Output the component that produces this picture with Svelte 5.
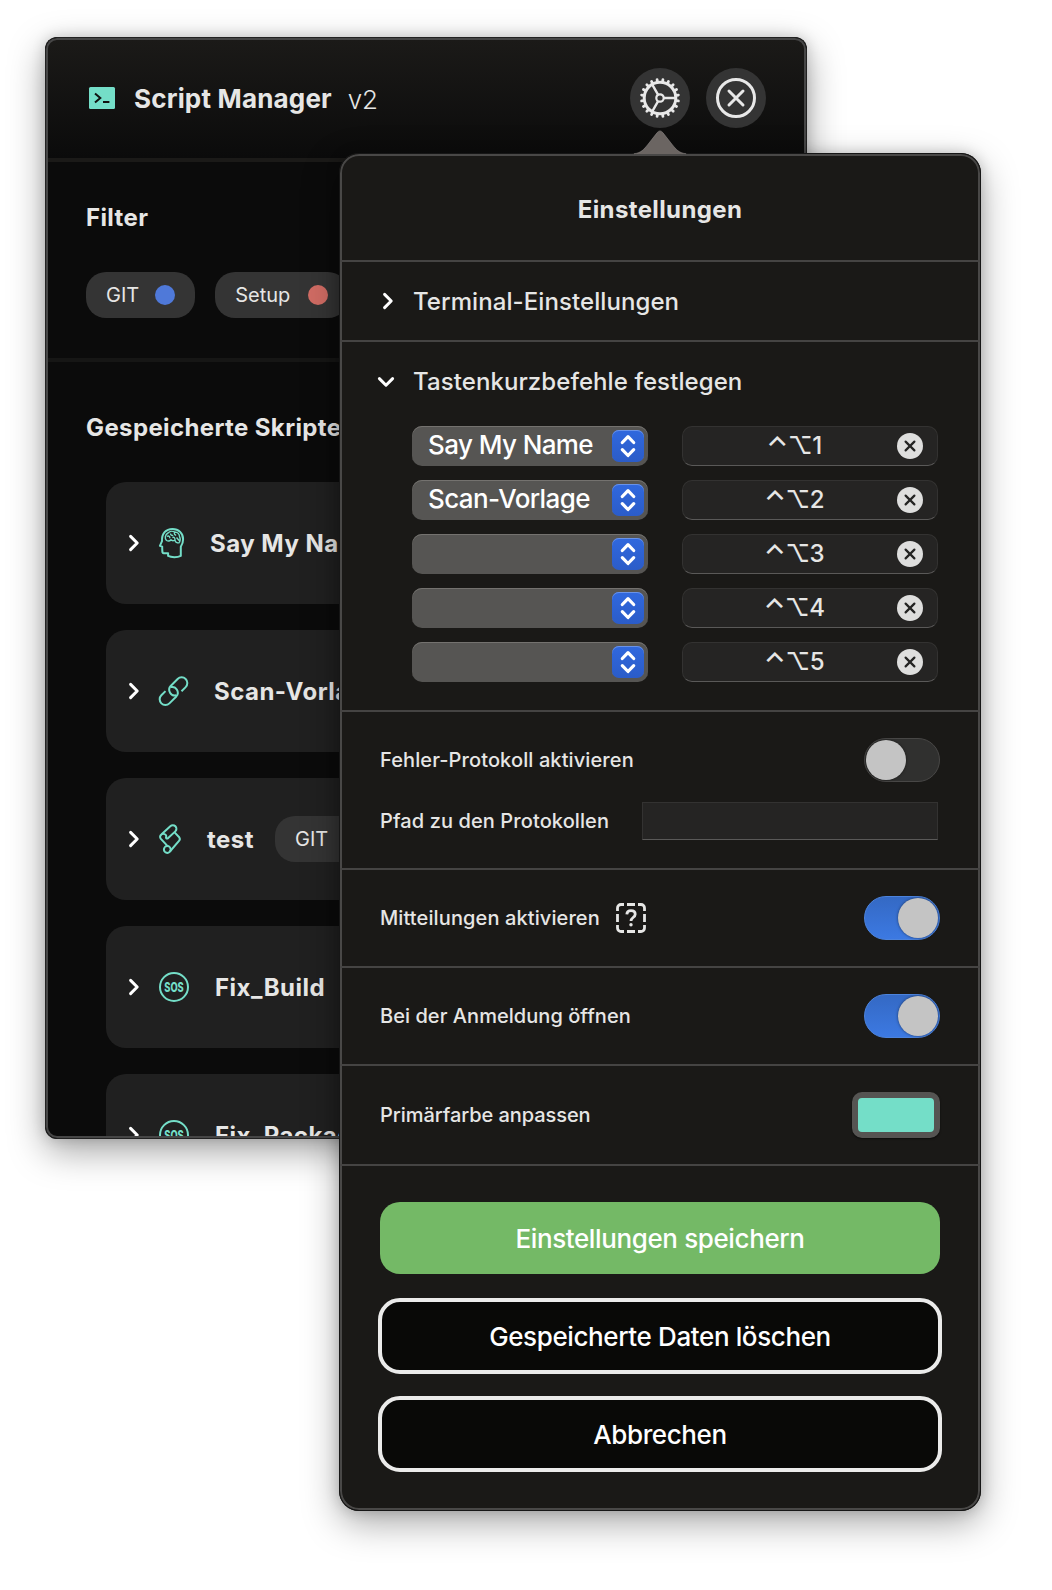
<script>
  const filters = [
    { label: 'GIT', tone: 'blue' },
    { label: 'Setup', tone: 'red' }
  ];
  const scripts = [
    { name: 'Say My Name', icon: 'brain' },
    { name: 'Scan-Vorlage', icon: 'link' },
    { name: 'test', icon: 'scroll', tag: 'GIT' },
    { name: 'Fix_Build', icon: 'sos' },
    { name: 'Fix_Packages', icon: 'sos' }
  ];
  const shortcuts = ['Say My Name', 'Scan-Vorlage', '', '', ''];
  const teeth = Array.from({ length: 20 }, (_, i) => i * 18 + 9);
</script>

{#snippet chevron(down)}
  <svg class="chevron" class:down width="20" height="20" viewBox="0 0 20 20">
    <path d="M6.6 3.4 13.2 10l-6.6 6.6" />
  </svg>
{/snippet}

{#snippet toggle(on)}
  <span class="toggle" class:on><i></i></span>
{/snippet}

<div class="desktop">
  <section class="window">
    <header>
      <svg width="26" height="22" viewBox="0 0 26 22">
        <rect width="26" height="22" rx="1.5" fill="#74dec8" />
        <path d="M6 6.5 11.3 11 6 15.5M14 15h6.4" fill="none" stroke="#11110f" stroke-width="2" />
      </svg>
      <h1>Script Manager</h1>
      <span class="version">v2</span>
      <button class="round gear" aria-label="Einstellungen">
        <svg width="40" height="40" viewBox="0 0 40 40" fill="none" stroke="#e8e8e8">
          <circle cx="20" cy="20" r="15.800" stroke-width="3" />
          {#each teeth as angle}
            <path d="M36.500 20h2.100" stroke-width="2.800" stroke-linecap="round" transform="rotate({angle} 20 20)" />
          {/each}
          <circle cx="20" cy="20" r="3.700" stroke-width="2.200" />
          <path d="M24 20h12M18 16.600 12 6.200M18 23.400 12 33.800" stroke-width="2.400" />
        </svg>
      </button>
      <button class="round" aria-label="Schließen">
        <svg width="40" height="40" viewBox="0 0 40 40" fill="none" stroke="#e8e8e8" stroke-linecap="round">
          <circle cx="20" cy="20" r="18.500" stroke-width="3" />
          <path d="m13 13 14 14M27 13 13 27" stroke-width="3" />
        </svg>
      </button>
    </header>

    <div class="filters">
      <h2>Filter</h2>
      <div class="pills">
        {#each filters as f}
          <span class="pill">{f.label}<i class={f.tone}></i></span>
        {/each}
      </div>
    </div>

    <div class="saved">
      <h2>Gespeicherte Skripte</h2>
      <ul>
        {#each scripts as s}
          <li>
            {@render chevron(false)}
            {#if s.icon === 'brain'}
              <svg class="glyph" width="25" height="30" viewBox="0 0 25 30">
                <path d="M3.200 18.600.9 17.800 3 13.200C2.600 5.500 6.800.9 13.500.9c6.300 0 10.600 4.400 10.600 10.300 0 3.200-.9 5.400-2.300 7.500v9.200c-3.500 1.700-9.500 1.700-12.700 0v-2.700H4.600c-1.600 0-1.300-1.400-1.400-6.600Z" />
                <path class="thin" d="M7.500 12.500C5.500 10.500 6 6.500 9 5c2-2 5-2 6.500-1 3 0 5 2 5 4.500 1.200 2 .8 4-.1 6M7.500 12.500c1.500.8 3.500.5 4.500-.8 1 1.600 3 1.300 4 .2 0 2 2 3 4.500 3M8 8.500c2-1.200 3.500.5 2.500 1.800M11.500 5.500c0 1.500 1.300 2.300 2.700 1.800M15.500 4.500c-.5 1.500.3 2.500 1.700 2.700M13.500 9.700c1.300-1 2.500-.3 2.500 2.200M17.500 9.500l2.600 3" />
              </svg>
            {:else if s.icon === 'link'}
              <svg class="glyph" width="29" height="29" viewBox="0 0 29 29">
                <g transform="translate(14.500 14.200) rotate(-45)">
                  <path d="M5.600 5.700H11.500a5.700 5.700 0 0 0 0-11.400H1.700a5.700 5.700 0 0 0-2.700 10.500" />
                  <path d="M-5.600-5.700H-11.500a5.700 5.700 0 0 0 0 11.400H-1.700a5.700 5.700 0 0 0 2.700-10.500" />
                </g>
              </svg>
            {:else if s.icon === 'scroll'}
              <svg class="glyph" width="22" height="30" viewBox="0 0 22 30">
                <path d="M2.300 10.600 11.300 2.200a3.600 3.600 0 0 1 5 5.200L8.900 14.300c-1.500.8-2.300-.3-1.700-1.700.4-2.300-3-3.700-4.900-2-1.500 1.200-1.600 2.900-.4 4.300l6.700 7.200" />
                <path d="M15.600 8.400 20.200 13.200q1.300 1.900 0 3.400L10.900 27.500" />
                <circle cx="8.300" cy="25.500" r="3.400" />
              </svg>
            {:else}
              <svg class="glyph sos" width="30" height="30" viewBox="0 0 30 30">
                <circle cx="15" cy="15" r="14" />
                <text x="15" y="19.700" text-anchor="middle" textLength="19.500" lengthAdjust="spacingAndGlyphs">SOS</text>
              </svg>
            {/if}
            <strong>{s.name}</strong>
            {#if s.tag}<span class="pill">{s.tag}<i class="blue"></i></span>{/if}
          </li>
        {/each}
      </ul>
    </div>
  </section>

  <section class="popover">
    <svg class="arrow" width="60" height="26" viewBox="0 0 60 26">
      <path d="M2 25C11 24.500 14 20 17.500 16L27.200 3.600q2.800-3.400 5.600 0L42.500 16c3.500 4 6.500 8.500 15.500 9Z" fill="#6b6562" />
      <path d="M4 24.700C11.500 24 14 20 17.500 16L27.200 3.600q2.800-3.400 5.600 0L42.500 16c3.500 4 6 8 13.500 8.700" fill="none" stroke="#8a8583" stroke-opacity=".6" />
    </svg>
    <h2 class="title">Einstellungen</h2>

    <div class="group terminal">
      {@render chevron(false)}<h3>Terminal-Einstellungen</h3>
    </div>

    <div class="group shortcuts">
      <div class="head">{@render chevron(true)}<h3>Tastenkurzbefehle festlegen</h3></div>
      {#each shortcuts as name, i}
        <div class="shortcut">
          <div class="select">
            <span>{name}</span>
            <b>
              <svg width="32" height="32" viewBox="0 0 32 32">
                <path d="m10.300 12.500 5.700-5.800 5.700 5.800M10.300 19.700l5.700 5.800 5.700-5.800" />
              </svg>
            </b>
          </div>
          <div class="keys">
            <span><em>⌃</em>⌥{i + 1}</span>
            <svg width="26" height="26" viewBox="0 0 26 26">
              <circle cx="13" cy="13" r="13" fill="#dededd" />
              <path d="m8.600 8.600 8.800 8.800M17.400 8.600l-8.800 8.800" stroke="#232322" stroke-width="2.200" stroke-linecap="round" />
            </svg>
          </div>
        </div>
      {/each}
    </div>

    <div class="group logs">
      <div class="row"><span class="l1">Fehler-Protokoll aktivieren</span>{@render toggle(false)}</div>
      <div class="row path"><span class="l2">Pfad zu den Protokollen</span><div class="field"></div></div>
    </div>

    <div class="group row">
      <span class="l1">Mitteilungen aktivieren</span>
      <svg class="help" width="30" height="30" viewBox="0 0 30 30">
        <path d="M1.500 8V5a3.500 3.500 0 0 1 3.500-3.500h3M11 1.500h8M22 1.500h3A3.500 3.500 0 0 1 28.500 5v3M28.500 11v8M28.500 22v3a3.500 3.500 0 0 1-3.500 3.500h-3M19 28.500h-8M8 28.500H5A3.500 3.500 0 0 1 1.500 25v-3M1.500 19v-8" />
        <path d="M10.800 11.300c.2-2.400 1.900-3.700 4.200-3.700 2.400 0 4.200 1.400 4.200 3.600 0 3.300-4.200 3.300-4.200 6.700" />
        <circle cx="15" cy="21.800" r="1.700" />
      </svg>
      {@render toggle(true)}
    </div>

    <div class="group row"><span class="l3">Bei der Anmeldung öffnen</span>{@render toggle(true)}</div>

    <div class="group row color"><span class="l4">Primärfarbe anpassen</span><span class="swatch"></span></div>

    <div class="group actions">
      <button class="save">Einstellungen speichern</button>
      <button>Gespeicherte Daten löschen</button>
      <button>Abbrechen</button>
    </div>
  </section>
</div>

<style>
  :global(body) {
    background: #fff;
  }
  .desktop {
    position: relative;
    width: 1052px;
    height: 1590px;
    overflow: hidden;
    font-family: Inter, 'Liberation Sans', sans-serif;
    color: #e6e6e5;
  }
  .desktop * {
    box-sizing: border-box;
  }
  svg {
    display: block;
    flex: none;
    overflow: visible;
  }
  h1, h2, h3, ul {
    margin: 0;
    padding: 0;
  }
  h2 {
    font-size: 24px;
    line-height: 30px;
    font-weight: 700;
    letter-spacing: 0.38px;
    white-space: nowrap;
  }
  button {
    font: inherit;
    border: 0;
    padding: 0;
  }

  .window {
    position: absolute;
    left: 45px;
    top: 37px;
    width: 762px;
    height: 1102px;
    padding: 3px;
    border-radius: 12px;
    overflow: hidden;
    background: #0b0b0b;
    box-shadow: 0 12px 36px rgba(0, 0, 0, 0.36), 0 0 14px rgba(0, 0, 0, 0.16);
  }
  .window::after {
    content: '';
    position: absolute;
    inset: 0;
    border: 1px solid #222;
    border-radius: 12px;
    box-shadow: inset 0 0 0 2px #464646;
  }
  header {
    display: flex;
    align-items: center;
    height: 122px;
    padding: 0 38px 2px 41px;
    border-bottom: 4px solid #1b1a18;
    background: linear-gradient(#1b1a18, #0b0b0b);
  }
  h1 {
    margin: 2px 0 0 19px;
    font-size: 26px;
    line-height: 32px;
    font-weight: 700;
    letter-spacing: 0.18px;
  }
  .version {
    margin: 2px 0 0 16px;
    font-size: 26px;
    font-weight: 300;
    letter-spacing: -0.2px;
  }
  .round {
    display: grid;
    place-items: center;
    width: 60px;
    height: 60px;
    border-radius: 50%;
    background: #343434;
  }
  .gear {
    margin: 0 16px 0 auto;
  }
  .filters {
    height: 200px;
    padding: 41px 38px 0;
    border-bottom: 4px solid #161615;
  }
  .pills {
    display: flex;
    gap: 20px;
    margin-top: 39px;
  }
  .pill {
    display: flex;
    align-items: center;
    height: 46px;
    padding: 0 20px;
    border-radius: 20px;
    background: #343434;
    font-size: 20px;
  }
  .pill i {
    width: 20px;
    height: 20px;
    margin-left: 16px;
    border-radius: 50%;
  }
  .pill .red {
    margin-left: 18px;
  }
  .blue {
    background: #4f79d9;
  }
  .red {
    background: #d16c64;
  }
  .saved {
    padding: 51px 38px 0;
  }
  ul {
    display: grid;
    gap: 26px;
    margin: 39px 20px 0;
    list-style: none;
  }
  li {
    display: flex;
    align-items: center;
    height: 122px;
    padding-left: 18px;
    border-radius: 20px;
    background: #202020;
  }
  .chevron {
    fill: none;
    stroke: #fff;
    stroke-width: 3;
    stroke-linecap: round;
    stroke-linejoin: round;
  }
  .down {
    transform: translateX(-2px) rotate(90deg);
  }
  .glyph {
    margin: 0 26px 0 15px;
    fill: none;
    stroke: #74dec8;
    stroke-width: 2;
    stroke-linejoin: round;
  }
  .thin {
    stroke-width: 1.4;
  }
  .sos text {
    fill: #74dec8;
    stroke: none;
    font-size: 13px;
    font-weight: 800;
  }
  strong {
    font-size: 24px;
    font-weight: 700;
    letter-spacing: 0.48px;
    white-space: nowrap;
  }
  li .pill {
    margin-left: 21px;
  }

  .popover {
    position: absolute;
    left: 339px;
    top: 153px;
    width: 642px;
    height: 1358px;
    padding: 1px;
    border-radius: 20px;
    background: #1a1917;
    box-shadow: 0 12px 36px rgba(0, 0, 0, 0.34), 0 0 14px rgba(0, 0, 0, 0.18);
  }
  .popover::after {
    content: '';
    position: absolute;
    inset: 0;
    border: 1px solid #161616;
    border-radius: 20px;
    box-shadow: inset 0 0 0 2px #494847;
    pointer-events: none;
  }
  .arrow {
    position: absolute;
    z-index: 1;
    left: 291px;
    top: -24px;
  }
  .title {
    height: 106px;
    line-height: 112px;
    text-align: center;
  }
  .group {
    position: relative;
    z-index: 1;
    border-top: 2px solid #454443;
    padding-left: 40px;
    padding-right: 40px;
  }
  h3 {
    font-size: 24px;
    line-height: 30px;
    font-weight: 500;
    letter-spacing: 0.08px;
    margin-left: 15px;
    white-space: nowrap;
  }
  .terminal {
    display: flex;
    align-items: center;
    height: 80px;
    padding-top: 1px;
    padding-left: 38px;
  }
  .terminal .chevron {
    margin-top: -2px;
  }
  .shortcuts {
    height: 370px;
    padding-top: 25px;
  }
  .head {
    display: flex;
    align-items: center;
    margin: 0 0 29px -2px;
  }
  .shortcut {
    display: flex;
    justify-content: space-between;
    margin: 0 2px 14px 32px;
  }
  .select {
    display: flex;
    justify-content: space-between;
    width: 236px;
    height: 40px;
    padding: 4px 4px 4px 16px;
    border-radius: 10px;
    background: #565553;
    box-shadow: inset 0 1px #74726f;
    color: #fff;
    font-size: 26px;
    font-weight: 450;
    letter-spacing: -0.6px;
    line-height: 30px;
    white-space: nowrap;
  }
  .select b {
    border-radius: 7px;
    background: linear-gradient(#3068de, #2b5cc8);
    box-shadow: inset 0 1px #6a93e8;
  }
  .select path {
    fill: none;
    stroke: #fff;
    stroke-width: 3.2;
    stroke-linecap: round;
    stroke-linejoin: round;
  }
  .keys {
    display: flex;
    align-items: center;
    width: 256px;
    height: 40px;
    padding-right: 14px;
    border: 1px solid #333231;
    border-bottom-color: #5a5958;
    border-radius: 10px;
    background: #252423;
    font-size: 24px;
    font-weight: 500;
    line-height: 30px;
  }
  .keys span {
    flex: 1;
    text-align: center;
    letter-spacing: -0.4px;
    padding: 0 0 1px 8px;
  }
  em {
    font-size: 28px;
    font-style: normal;
    line-height: 1px;
    vertical-align: -3px;
  }
  .logs {
    height: 158px;
    padding-top: 26px;
  }
  .row {
    display: flex;
    align-items: center;
    height: 98px;
    font-size: 20px;
    font-weight: 450;
    letter-spacing: 0.11px;
    white-space: nowrap;
  }
  .l2 {
    letter-spacing: 0.1px;
  }
  .l3 {
    letter-spacing: 0.05px;
  }
  .l4 {
    letter-spacing: -0.06px;
  }
  .logs .row {
    height: 44px;
  }
  .logs .path {
    height: 38px;
    margin-top: 20px;
  }
  .field {
    width: 296px;
    height: 38px;
    margin: 0 2px 0 auto;
    border: 1px solid #333231;
    border-bottom-color: #5a5958;
    background: #252423;
  }
  .toggle {
    display: flex;
    width: 76px;
    height: 44px;
    margin-left: auto;
    padding: 1px;
    border: 1px solid #484746;
    border-radius: 22px;
    background: #30302f;
  }
  .toggle i {
    width: 40px;
    height: 40px;
    border-radius: 50%;
    background: #c4c4c4;
    box-shadow: 0 0 3px rgba(0, 0, 0, 0.5);
  }
  .on {
    justify-content: flex-end;
    border-color: #4c83dc;
    background: linear-gradient(#3469c4, #3c79e2);
  }
  .help {
    margin-left: 16px;
    fill: none;
    stroke: #e6e6e5;
    stroke-width: 2.8;
  }
  .help circle {
    fill: #e6e6e5;
    stroke: none;
  }
  .color {
    height: 100px;
  }
  .swatch {
    width: 88px;
    height: 46px;
    margin-left: auto;
    border: 6px solid #555452;
    border-radius: 10px;
    background: #74dec8;
    box-shadow: 0 1px 2px rgba(0, 0, 0, 0.6);
  }
  .actions {
    padding-top: 36px;
  }
  .actions button {
    display: block;
    width: 564px;
    height: 76px;
    margin: 0 -2px 22px;
    border: 4px solid #ebebea;
    border-radius: 22px;
    background: #090907;
    color: #fff;
    font-size: 26px;
    font-weight: 450;
    letter-spacing: -0.38px;
  }
  .actions .save {
    width: 560px;
    height: 72px;
    margin: 0 0 24px;
    border: 0;
    border-radius: 20px;
    background: #74b966;
  }
</style>
